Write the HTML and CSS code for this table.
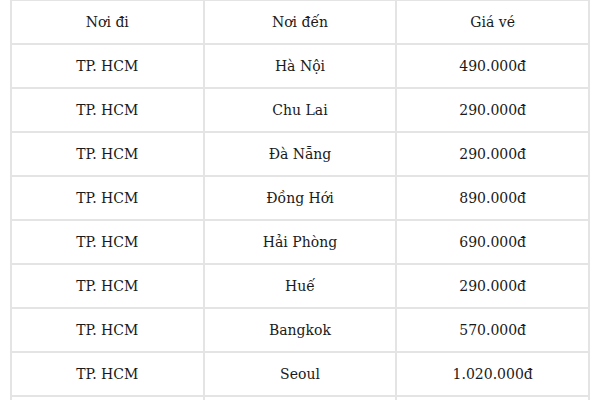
FILE: index.html
```html
<!DOCTYPE html>
<html>
<head>
<meta charset="utf-8">
<link rel="stylesheet" href="styles.css">
</head>
<body>
<table class="fares">
  <thead>
    <tr><th>Nơi đi</th><th>Nơi đến</th><th>Giá vé</th></tr>
  </thead>
  <tbody>
    <tr><td>TP. HCM</td><td>Hà Nội</td><td>490.000đ</td></tr>
    <tr><td>TP. HCM</td><td>Chu Lai</td><td>290.000đ</td></tr>
    <tr><td>TP. HCM</td><td>Đà Nẵng</td><td>290.000đ</td></tr>
    <tr><td>TP. HCM</td><td>Đồng Hới</td><td>890.000đ</td></tr>
    <tr><td>TP. HCM</td><td>Hải Phòng</td><td>690.000đ</td></tr>
    <tr><td>TP. HCM</td><td>Huế</td><td>290.000đ</td></tr>
    <tr><td>TP. HCM</td><td>Bangkok</td><td>570.000đ</td></tr>
    <tr><td>TP. HCM</td><td>Seoul</td><td>1.020.000đ</td></tr>
    <tr class="more" aria-hidden="true"><td></td><td></td><td></td></tr>
  </tbody>
</table>
</body>
</html>
```

FILE: styles.css
```css
html, body {
  margin: 0;
  padding: 0;
  background: #fff;
}
body {
  padding: 0 10px;
  font-family: "DejaVu Serif", serif;
  color: #1a1a1a;
}
.fares {
  width: 580px;
  margin-top: -1px;
  border-collapse: collapse;
  table-layout: fixed;
  font-size: 14px;
}
.fares th,
.fares td {
  border: 2px solid #e4e4e4;
  height: 42px;
  padding: 0;
  text-align: center;
  vertical-align: middle;
  font-weight: normal;
}
```
